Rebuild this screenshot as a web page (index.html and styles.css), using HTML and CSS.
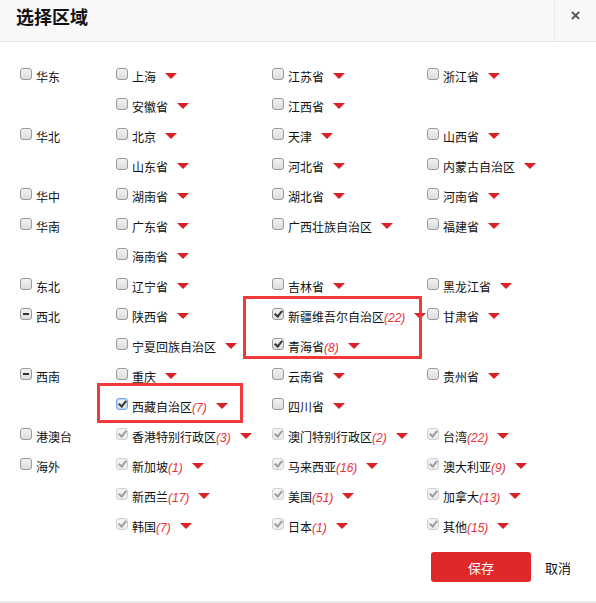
FILE: index.html
```html
<!DOCTYPE html>
<html lang="zh-CN">
<head>
<meta charset="utf-8">
<title>选择区域</title>
<link rel="stylesheet" href="styles.css">
</head>
<body>
<div class="modal">
  <div class="header">
    <h1 class="title">选择区域</h1>
    <div class="close">×</div>
  </div>
  <div class="body">
    <div class="group">
      <div class="region"><span class="cb"></span><span>华东</span></div>
      <div class="items">
        <div class="item"><span class="cb"></span><span>上海</span><i class="arrow"></i></div>
        <div class="item"><span class="cb"></span><span>江苏省</span><i class="arrow"></i></div>
        <div class="item"><span class="cb"></span><span>浙江省</span><i class="arrow"></i></div>
        <div class="item"><span class="cb"></span><span>安徽省</span><i class="arrow"></i></div>
        <div class="item"><span class="cb"></span><span>江西省</span><i class="arrow"></i></div>
      </div>
    </div>
    <div class="group">
      <div class="region"><span class="cb"></span><span>华北</span></div>
      <div class="items">
        <div class="item"><span class="cb"></span><span>北京</span><i class="arrow"></i></div>
        <div class="item"><span class="cb"></span><span>天津</span><i class="arrow"></i></div>
        <div class="item"><span class="cb"></span><span>山西省</span><i class="arrow"></i></div>
        <div class="item"><span class="cb"></span><span>山东省</span><i class="arrow"></i></div>
        <div class="item"><span class="cb"></span><span>河北省</span><i class="arrow"></i></div>
        <div class="item"><span class="cb"></span><span>内蒙古自治区</span><i class="arrow"></i></div>
      </div>
    </div>
    <div class="group">
      <div class="region"><span class="cb"></span><span>华中</span></div>
      <div class="items">
        <div class="item"><span class="cb"></span><span>湖南省</span><i class="arrow"></i></div>
        <div class="item"><span class="cb"></span><span>湖北省</span><i class="arrow"></i></div>
        <div class="item"><span class="cb"></span><span>河南省</span><i class="arrow"></i></div>
      </div>
    </div>
    <div class="group">
      <div class="region"><span class="cb"></span><span>华南</span></div>
      <div class="items">
        <div class="item"><span class="cb"></span><span>广东省</span><i class="arrow"></i></div>
        <div class="item"><span class="cb"></span><span>广西壮族自治区</span><i class="arrow"></i></div>
        <div class="item"><span class="cb"></span><span>福建省</span><i class="arrow"></i></div>
        <div class="item"><span class="cb"></span><span>海南省</span><i class="arrow"></i></div>
      </div>
    </div>
    <div class="group">
      <div class="region"><span class="cb"></span><span>东北</span></div>
      <div class="items">
        <div class="item"><span class="cb"></span><span>辽宁省</span><i class="arrow"></i></div>
        <div class="item"><span class="cb"></span><span>吉林省</span><i class="arrow"></i></div>
        <div class="item"><span class="cb"></span><span>黑龙江省</span><i class="arrow"></i></div>
      </div>
    </div>
    <div class="group">
      <div class="region"><span class="cb partial"></span><span>西北</span></div>
      <div class="items">
        <div class="item"><span class="cb"></span><span>陕西省</span><i class="arrow"></i></div>
        <div class="item"><span class="cb checked"></span><span>新疆维吾尔自治区<em class="count">(22)</em></span><i class="arrow"></i></div>
        <div class="item"><span class="cb"></span><span>甘肃省</span><i class="arrow"></i></div>
        <div class="item"><span class="cb"></span><span>宁夏回族自治区</span><i class="arrow"></i></div>
        <div class="item"><span class="cb checked"></span><span>青海省<em class="count">(8)</em></span><i class="arrow"></i></div>
      </div>
      <div class="mark mark-nw"></div>
    </div>
    <div class="group">
      <div class="region"><span class="cb partial"></span><span>西南</span></div>
      <div class="items">
        <div class="item"><span class="cb"></span><span>重庆</span><i class="arrow"></i></div>
        <div class="item"><span class="cb"></span><span>云南省</span><i class="arrow"></i></div>
        <div class="item"><span class="cb"></span><span>贵州省</span><i class="arrow"></i></div>
        <div class="item"><span class="cb checked focus"></span><span>西藏自治区<em class="count">(7)</em></span><i class="arrow"></i></div>
        <div class="item"><span class="cb"></span><span>四川省</span><i class="arrow"></i></div>
      </div>
      <div class="mark mark-sw"></div>
    </div>
    <div class="group">
      <div class="region"><span class="cb"></span><span>港澳台</span></div>
      <div class="items">
        <div class="item"><span class="cb checked disabled"></span><span>香港特别行政区<em class="count">(3)</em></span><i class="arrow"></i></div>
        <div class="item"><span class="cb checked disabled"></span><span>澳门特别行政区<em class="count">(2)</em></span><i class="arrow"></i></div>
        <div class="item"><span class="cb checked disabled"></span><span>台湾<em class="count">(22)</em></span><i class="arrow"></i></div>
      </div>
    </div>
    <div class="group">
      <div class="region"><span class="cb"></span><span>海外</span></div>
      <div class="items">
        <div class="item"><span class="cb checked disabled"></span><span>新加坡<em class="count">(1)</em></span><i class="arrow"></i></div>
        <div class="item"><span class="cb checked disabled"></span><span>马来西亚<em class="count">(16)</em></span><i class="arrow"></i></div>
        <div class="item"><span class="cb checked disabled"></span><span>澳大利亚<em class="count">(9)</em></span><i class="arrow"></i></div>
        <div class="item"><span class="cb checked disabled"></span><span>新西兰<em class="count">(17)</em></span><i class="arrow"></i></div>
        <div class="item"><span class="cb checked disabled"></span><span>美国<em class="count">(51)</em></span><i class="arrow"></i></div>
        <div class="item"><span class="cb checked disabled"></span><span>加拿大<em class="count">(13)</em></span><i class="arrow"></i></div>
        <div class="item"><span class="cb checked disabled"></span><span>韩国<em class="count">(7)</em></span><i class="arrow"></i></div>
        <div class="item"><span class="cb checked disabled"></span><span>日本<em class="count">(1)</em></span><i class="arrow"></i></div>
        <div class="item"><span class="cb checked disabled"></span><span>其他<em class="count">(15)</em></span><i class="arrow"></i></div>
      </div>
    </div>
  </div>
  <div class="footer">
    <button class="btn-save">保存</button>
    <span class="btn-cancel">取消</span>
  </div>
</div>
</body>
</html>
```

FILE: styles.css
```css
html, body {
  margin: 0;
  padding: 0;
  background: #fff;
}
body {
  font-family: "Noto Sans CJK SC", "Liberation Sans", sans-serif;
  font-size: 12px;
  color: #111;
}
.modal {
  width: 596px;
  height: 603px;
  position: relative;
  box-sizing: border-box;
  border-bottom: 2px solid #ebebeb;
}
.header {
  height: 41px;
  background: #f8f8f8;
  border-bottom: 1px solid #e6e6e6;
  display: flex;
  align-items: stretch;
}
.title {
  flex: 1;
  margin: 0;
  padding-left: 16px;
  font-size: 18px;
  font-weight: bold;
  line-height: 33px;
  color: #111;
}
.close {
  width: 42px;
  border-left: 1px solid #e8e8e8;
  display: flex;
  align-items: center;
  justify-content: center;
  padding-bottom: 9px;
  box-sizing: border-box;
  font-family: "Liberation Sans", sans-serif;
  font-size: 17px;
  font-weight: bold;
  color: #555;
}
.body {
  padding: 19px 0 0 20px;
}
.group {
  display: flex;
  position: relative;
}
.region {
  width: 96px;
  flex: none;
  height: 30px;
  display: flex;
  align-items: center;
  gap: 4px;
}
.items {
  display: grid;
  grid-template-columns: 156px 155px 150px;
  grid-auto-rows: 30px;
}
.item {
  display: flex;
  align-items: center;
  white-space: nowrap;
}
.item > span:nth-child(2) {
  margin-left: 4px;
}
.cb {
  width: 12px;
  height: 12px;
  box-sizing: border-box;
  border: 1px solid #9a9a9a;
  border-radius: 3px;
  background: linear-gradient(#f2f2f2, #dcdcdc);
  position: relative;
  flex: none;
  margin-top: -4px;
}
.cb.checked::after {
  content: "";
  position: absolute;
  left: 3px;
  top: 0px;
  width: 3px;
  height: 6px;
  border-right: 2px solid #333;
  border-bottom: 2px solid #333;
  transform: rotate(40deg);
}
.cb.partial::after {
  content: "";
  position: absolute;
  left: 2px;
  right: 2px;
  top: 4px;
  height: 2px;
  background: #333;
}
.cb.focus {
  border-color: #6fa6e6;
  box-shadow: inset 0 0 0 1px #bcd6f3;
}
.cb.disabled {
  border-color: #d0d0d0;
  background: linear-gradient(#f4f4f4, #ececec);
}
.cb.disabled::after {
  border-color: #9e9e9e;
}
.count {
  font-family: "Liberation Sans", sans-serif;
  font-style: italic;
  font-size: 12px;
  color: #e8313a;
}
.arrow {
  display: block;
  width: 0;
  height: 0;
  margin-left: 9px;
  border-left: 6px solid transparent;
  border-right: 6px solid transparent;
  border-top: 6px solid #da2128;
  flex: none;
}
.mark {
  position: absolute;
  border: 3px solid #f03a3a;
  box-sizing: border-box;
  pointer-events: none;
}
.mark-nw {
  left: 223px;
  top: -5px;
  width: 179px;
  height: 63px;
}
.mark-sw {
  left: 77px;
  top: 22px;
  width: 146px;
  height: 40px;
}
.footer {
  display: flex;
  justify-content: flex-end;
  align-items: center;
  padding: 11px 25px 0 0;
  gap: 14px;
}
.btn-save {
  width: 100px;
  height: 30px;
  border: 0;
  border-radius: 3px;
  background: #e0282b;
  color: #fff;
  font-family: "Noto Sans CJK SC", sans-serif;
  font-size: 13px;
  padding: 0;
}
.btn-cancel {
  font-size: 13px;
  color: #111;
}
```
